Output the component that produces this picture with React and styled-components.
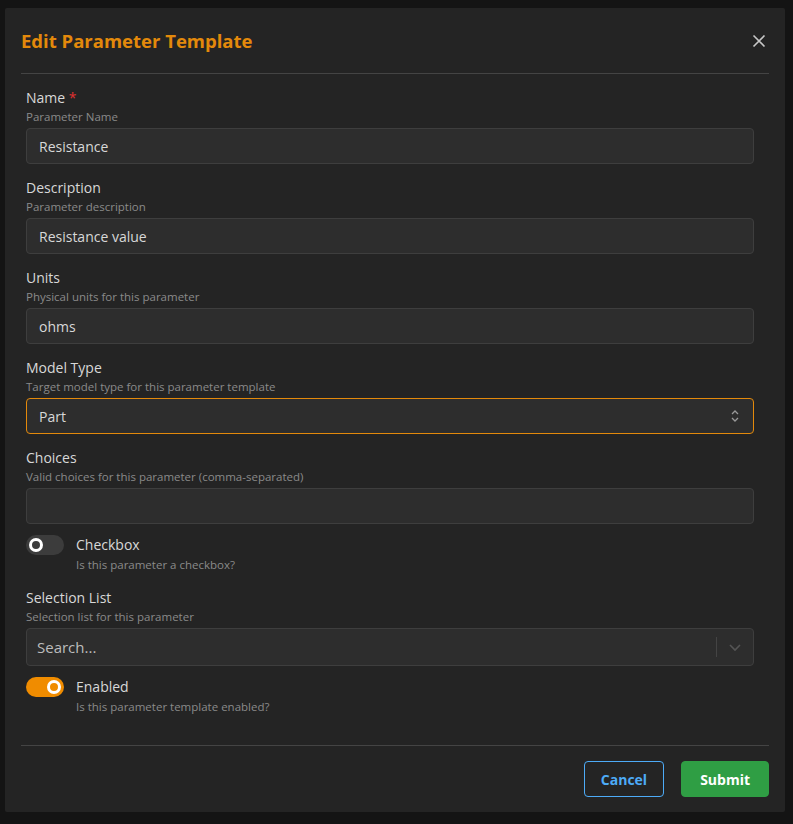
import React from 'react';
import styled, { createGlobalStyle } from 'styled-components';

const Global = createGlobalStyle`
  html, body { margin: 0; background: #161616; }
  body { font-family: "Open Sans", "Noto Sans", sans-serif; color: #d6d6d6; }
`;

const Backdrop = styled.div`
  width: 793px;
  height: 824px;
  padding: 8px 8px 12px 5px;
  box-sizing: border-box;
  background: #141414;
`;

const Modal = styled.div`
  width: 780px;
  height: 804px;
  background: #242424;
  border-radius: 2px;
  padding: 0 16px 0 16px;
  box-sizing: border-box;
  display: flex;
  flex-direction: column;
`;

const Header = styled.div`
  height: 65px;
  display: flex;
  align-items: center;
  justify-content: space-between;
  border-bottom: 1px solid #444;
`;

const Title = styled.h2`
  margin: 0;
  font-size: 18.5px;
  font-weight: 700;
  color: #e3890b;
`;

const Close = styled.button`
  background: none;
  border: none;
  color: #bbb;
  padding: 0;
  margin-right: 2px;
  display: flex;
`;

const Body = styled.div`
  padding: 14px 15px 0 5px;
  display: flex;
  flex-direction: column;
  gap: 14px;
  flex: 1;
  border-bottom: 1px solid #444;
`;

const Field = styled.div`
  display: flex;
  flex-direction: column;
`;

const Label = styled.div`
  font-size: 14px;
  line-height: 20px;
  color: #d8d8d8;
  span { color: #e03131; }
`;

const Desc = styled.div`
  font-size: 11.5px;
  line-height: 18px;
  color: #8a8a8a;
  margin-bottom: 2px;
`;

const Input = styled.div`
  height: 36px;
  box-sizing: border-box;
  border: 1px solid ${p => (p.$focus ? '#e3890b' : '#3e3e3e')};
  background: #2d2d2d;
  border-radius: 4px;
  display: flex;
  align-items: center;
  justify-content: space-between;
  padding: 0 12px;
  font-size: 14px;
  color: #d8d8d8;
`;

const SearchBox = styled(Input)`
  height: 38px;
  padding: 0 0 0 10px;
  font-size: 15px;
  color: #bcbcbc;
`;

const Sep = styled.div`
  width: 1px;
  height: 20px;
  background: #444;
  margin-right: 8px;
`;

const Toggle = styled.div`
  width: 38px;
  height: 20px;
  border-radius: 10px;
  background: ${p => (p.$on ? '#f08c00' : '#3c3c3c')};
  display: flex;
  align-items: center;
  justify-content: ${p => (p.$on ? 'flex-end' : 'flex-start')};
  padding: 0 3px;
  box-sizing: border-box;
  flex-shrink: 0;
  &::after {
    content: '';
    width: 8px;
    height: 8px;
    border-radius: 50%;
    border: 3.5px solid #fff;
    background: ${p => (p.$on ? '#f08c00' : '#3c3c3c')};
  }
`;

const SwitchRow = styled.div`
  display: flex;
  gap: 12px;
  align-items: flex-start;
  margin-top: -3px;
`;

const SwitchText = styled.div`
  display: flex;
  flex-direction: column;
`;

const SwitchDesc = styled(Desc)`
  margin: 1px 0 0;
`;

const Footer = styled.div`
  height: 66px;
  display: flex;
  justify-content: flex-end;
  align-items: center;
  gap: 17px;
  padding-bottom: 0;
`;

const Button = styled.button`
  height: 36px;
  border-radius: 4px;
  font-family: inherit;
  font-size: 14px;
  font-weight: 700;
  padding: 0 ${p => (p.$primary ? '18px' : '16px')};
  border: 1px solid ${p => (p.$primary ? '#2f9e44' : '#4dabf7')};
  background: ${p => (p.$primary ? '#2f9e44' : 'transparent')};
  color: ${p => (p.$primary ? '#fff' : '#4dabf7')};
`;

const fields = [
  { label: 'Name', req: true, desc: 'Parameter Name', value: 'Resistance' },
  { label: 'Description', desc: 'Parameter description', value: 'Resistance value' },
  { label: 'Units', desc: 'Physical units for this parameter', value: 'ohms' },
  { label: 'Model Type', desc: 'Target model type for this parameter template', value: 'Part', select: true },
  { label: 'Choices', desc: 'Valid choices for this parameter (comma-separated)', value: '' },
];

function UpDown() {
  return (
    <svg width="12" height="14" viewBox="0 0 12 14" fill="none" stroke="#999" strokeWidth="1.3">
      <path d="M3 5l3-3 3 3M3 9l3 3 3-3" />
    </svg>
  );
}

export default function App() {
  return (
    <Backdrop>
      <Global />
      <Modal>
        <Header>
          <Title>Edit Parameter Template</Title>
          <Close>
            <svg width="16" height="16" viewBox="0 0 16 16" stroke="#c8c8c8" strokeWidth="1.6">
              <path d="M2.5 2.5l11 11M13.5 2.5l-11 11" />
            </svg>
          </Close>
        </Header>
        <Body>
          {fields.map(f => (
            <Field key={f.label}>
              <Label>{f.label}{f.req && <span> *</span>}</Label>
              <Desc>{f.desc}</Desc>
              <Input $focus={f.select}>
                {f.value}
                {f.select && <UpDown />}
              </Input>
            </Field>
          ))}
          <SwitchRow>
            <Toggle />
            <SwitchText>
              <Label>Checkbox</Label>
              <SwitchDesc>Is this parameter a checkbox?</SwitchDesc>
            </SwitchText>
          </SwitchRow>
          <Field>
            <Label>Selection List</Label>
            <Desc>Selection list for this parameter</Desc>
            <SearchBox>
              Search...
              <div style={{ display: 'flex', alignItems: 'center' }}>
                <Sep />
                <svg width="20" height="20" viewBox="0 0 20 20" fill="none" stroke="#555" strokeWidth="1.6" style={{ marginRight: 8 }}>
                  <path d="M5 8l5 5 5-5" />
                </svg>
              </div>
            </SearchBox>
          </Field>
          <SwitchRow>
            <Toggle $on />
            <SwitchText>
              <Label>Enabled</Label>
              <SwitchDesc>Is this parameter template enabled?</SwitchDesc>
            </SwitchText>
          </SwitchRow>
        </Body>
        <Footer>
          <Button>Cancel</Button>
          <Button $primary>Submit</Button>
        </Footer>
      </Modal>
    </Backdrop>
  );
}
